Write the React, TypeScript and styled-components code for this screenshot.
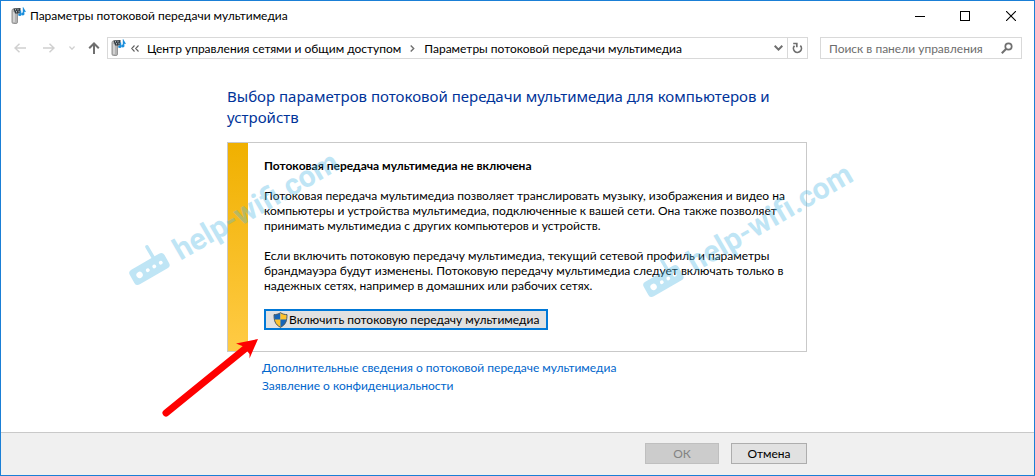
import React from "react";
import styled, { createGlobalStyle } from "styled-components";

const GlobalStyle = createGlobalStyle`
  *, *::before, *::after { box-sizing: border-box; }
  body { margin: 0; }
  body, button, input {
    font-family: Lato, "Noto Sans", sans-serif;
    font-size: 12px;
    line-height: 15px;
    color: #000;
  }
`;

const Window = styled.div`
  display: flex;
  flex-direction: column;
  min-height: 100vh;
  border: 1px solid #1a7fd6;
  background: #fff;
  overflow: hidden;
`;

const TitleBar = styled.header`
  display: flex;
  align-items: center;
  height: 29px;
  padding-left: 10px;
  gap: 4px;
`;

const WindowTitle = styled.h1`
  flex: 1;
  margin: 0;
  font-size: 12px;
  font-weight: 400;
  white-space: nowrap;
`;

const WindowControls = styled.div`
  display: flex;
`;

const IconButton = styled.button<{ $width: number; $color?: string }>`
  display: flex;
  align-items: center;
  justify-content: center;
  flex: none;
  width: ${(p) => p.$width}px;
  height: 28px;
  padding: 0;
  border: 0;
  background: transparent;
  color: ${(p) => p.$color ?? "#000"};
`;

const NavBar = styled.nav`
  display: flex;
  align-items: center;
  height: 36px;
  padding: 0 12px 0 4px;
`;

const AddressBar = styled.div`
  display: flex;
  align-items: center;
  flex: 1;
  min-width: 0;
  height: 22px;
  margin: 0 12px 0 1px;
  padding-left: 3px;
  border: 1px solid #d9d9d9;
`;

const Crumbs = styled.ol`
  display: flex;
  align-items: center;
  flex: 1;
  min-width: 0;
  margin: 0;
  padding: 0 0 0 5px;
  list-style: none;
  white-space: nowrap;
  overflow: hidden;
`;

const Crumb = styled.li`
  display: flex;
  align-items: center;
`;

const CrumbLink = styled.a`
  color: #000;
  text-decoration: none;
`;

const Separator = styled.svg`
  flex: none;
  margin: 0 9px;
`;

const Overflow = styled.svg`
  flex: none;
  margin-right: 8px;
`;

const RefreshCell = styled.div`
  display: flex;
  align-items: center;
  height: 20px;
  border-left: 1px solid #d9d9d9;
`;

const SearchBox = styled.label`
  display: flex;
  align-items: center;
  width: 202px;
  height: 22px;
  padding: 0 8px;
  border: 1px solid #d9d9d9;
`;

const SearchInput = styled.input`
  flex: 1;
  min-width: 0;
  padding: 0;
  border: 0;
  outline: 0;
  background: transparent;
  &::placeholder { color: #6d6d6d; opacity: 1; }
`;

const Main = styled.main`
  flex: 1;
  padding: 20px 17px 31px 16px;
`;

const Column = styled.div`
  position: relative;
  max-width: 580px;
  margin: 0 auto;
`;

const Heading = styled.h2`
  margin: 0 0 14px;
  font-family: "Noto Sans", sans-serif;
  font-size: 15px;
  line-height: 21px;
  font-weight: 400;
  color: #003399;
`;

const Panel = styled.section`
  display: flex;
  border: 1px solid #c9c9c9;
`;

const WarningStripe = styled.div`
  flex: none;
  width: 20px;
  background: linear-gradient(#f0b000, #ffcb45);
`;

const PanelBody = styled.div`
  padding: 15px 16px 21px;
`;

const PanelTitle = styled.h3`
  margin: 0 0 15px;
  font-size: 12px;
  line-height: 15px;
  font-weight: 700;
`;

const Paragraph = styled.p`
  margin: 0 0 15px;
`;

const EnableButton = styled.button`
  display: flex;
  align-items: center;
  gap: 1px;
  height: 21px;
  min-width: 284px;
  margin-top: 16px;
  padding: 0 7px;
  border: 2px solid #0078d7;
  background: #e1e1e1;
  white-space: nowrap;
`;

const Links = styled.div`
  display: flex;
  flex-direction: column;
  align-items: flex-start;
  padding: 7px 0 0 35px;
`;

const TextLink = styled.a`
  line-height: 18px;
  color: #0066cc;
  text-decoration: none;
`;

const Footer = styled.footer`
  padding: 10px 17px 11px 16px;
  border-top: 1px solid #c9c9c9;
  background: #f0f0f0;
`;

const FooterActions = styled.div`
  display: flex;
  justify-content: flex-end;
  gap: 12px;
  max-width: 580px;
  margin: 0 auto;
`;

const DialogButton = styled.button`
  min-width: 76px;
  height: 21px;
  padding: 0 12px;
  border: 1px solid #adadad;
  background: #e1e1e1;
  &:disabled {
    min-width: 74px;
    border-color: #bfbfbf;
    background: #cccccc;
    color: #838383;
  }
`;

const Overlay = styled.svg<{ $left: number; $top: number }>`
  position: absolute;
  left: ${(p) => p.$left}px;
  top: ${(p) => p.$top}px;
  overflow: visible;
  pointer-events: none;
`;

function MediaIcon() {
  return (
    <svg width="15" height="18" viewBox="0 0 15 18" aria-hidden="true">
      <rect x="1" y="2" width="5.500" height="14.5" rx="1.500" fill="#b4b4b4" stroke="#959595" />
      <path d="M3 5v10" stroke="#dedede" strokeWidth="1.4" />
      <path d="M2.500 1.500 9.500 1v5.500H4z" fill="#343c42" />
      <path d="M4 2.800h1m1.500 0h1M5 4.800h1m1.500 0h1" stroke="#dfe5e8" />
      <path d="M9.500 7.500V3.500M12.500 6.500V2l1.800 3" fill="none" stroke="#1c8fdc" strokeWidth="1.400" />
      <ellipse cx="8.800" cy="7.700" rx="1.700" ry="1.300" fill="#1c8fdc" />
      <ellipse cx="11.800" cy="7" rx="1.700" ry="1.400" fill="#1c8fdc" />
    </svg>
  );
}

function ShieldIcon() {
  return (
    <svg width="15" height="16" viewBox="0 0 15 16" aria-hidden="true">
      <path d="M7.500 .5C5.500 2 3 2.500 1 2.500c0 6 1 10 6.500 13z" fill="#1565b8" />
      <path d="M7.500 .5c2 1.500 4.500 2 6.500 2 0 6-1 10-6.500 13z" fill="#fdc22d" />
      <path d="M1.200 7.500h6.300v8C3.500 13.300 1.800 10.800 1.200 7.500z" fill="#fdc22d" />
      <path d="M13.800 7.500H7.500v8c4-2.200 5.700-4.700 6.300-8z" fill="#1565b8" />
      <path d="M7.500 .7C5.500 2.200 3 2.600 1 2.600c0 6 1 9.800 6.500 12.700C13 12.400 14 8.600 14 2.600c-2 0-4.500-.4-6.500-1.900z" fill="none" stroke="#4f5d66" strokeWidth="1" />
    </svg>
  );
}

function Arrow({ flip = false }: { flip?: boolean }) {
  return (
    <svg width="12" height="10" viewBox="0 0 12 10" fill="none" stroke="currentColor" strokeWidth="1.500" aria-hidden="true">
      <path d={flip ? "M0 5h11M6.500 .7 11 5 6.500 9.300" : "M12 5H1M5.500 .7 1 5l4.500 4.300"} />
    </svg>
  );
}

function Watermark({ left, top }: { left: number; top: number }) {
  return (
    <Overlay $left={left} $top={top} width="220" height="132" viewBox="0 0 220 132" aria-hidden="true">
      <g transform="translate(10 126) rotate(-30)" opacity="0.360">
        <path fill="#4fb8e4" fillRule="evenodd" d="M5-16h9v0h23a4 4 0 0 1 4 4v9a4 4 0 0 1-4 4H5a4 4 0 0 1-4-4v-9a4 4 0 0 1 4-4zM9.500-10.500a3.200 3.200 0 1 0 0 6.400 3.200 3.200 0 0 0 0-6.400zM19-9.200a1.900 1.900 0 1 0 0 3.800 1.900 1.900 0 0 0 0-3.800zM26.500-9.200a1.900 1.900 0 1 0 0 3.800 1.900 1.900 0 0 0 0-3.800zM34-9.200a1.900 1.900 0 1 0 0 3.800 1.900 1.900 0 0 0 0-3.800z" />
        <path d="M30-16v-12" stroke="#4fb8e4" strokeWidth="3.500" strokeLinecap="round" />
        <text x="52" y="1" fill="#4fb8e4" fontFamily="Roboto, sans-serif" fontWeight="700" fontSize="30">
          help-wifi.com
        </text>
      </g>
    </Overlay>
  );
}

export default function App() {
  return (
    <>
      <GlobalStyle />
      <Window>
        <TitleBar>
          <MediaIcon />
          <WindowTitle>Параметры потоковой передачи мультимедиа</WindowTitle>
          <WindowControls>
            <IconButton $width={46} aria-label="Свернуть">
              <svg width="10" height="10" viewBox="0 0 10 10"><path d="M0 5.500h10" stroke="#000" /></svg>
            </IconButton>
            <IconButton $width={44} aria-label="Развернуть">
              <svg width="10" height="10" viewBox="0 0 10 10"><rect x=".5" y=".5" width="9" height="9" fill="none" stroke="#000" /></svg>
            </IconButton>
            <IconButton $width={47} aria-label="Закрыть">
              <svg width="10" height="10" viewBox="0 0 10 10"><path d="M0 0l10 10M10 0 0 10" stroke="#000" strokeWidth="1.100" /></svg>
            </IconButton>
          </WindowControls>
        </TitleBar>

        <NavBar aria-label="Навигация">
          <IconButton $width={30} $color="#d0d0d0" aria-label="Назад"><Arrow /></IconButton>
          <IconButton $width={28} $color="#d0d0d0" aria-label="Вперед"><Arrow flip /></IconButton>
          <IconButton $width={18} $color="#d0d0d0" aria-label="Последние расположения">
            <svg width="6" height="4" viewBox="0 0 6 4" fill="none" stroke="currentColor" strokeWidth="1.300"><path d="M.4 .5 3 3.200 5.600 .5" /></svg>
          </IconButton>
          <IconButton $width={25} $color="#6f6f6f" aria-label="Вверх">
            <svg width="12" height="12" viewBox="0 0 12 12" fill="none" stroke="currentColor" strokeWidth="2"><path d="M6 12V1.500M1.200 6.300 6 1.500l4.800 4.800" /></svg>
          </IconButton>
          <AddressBar>
            <MediaIcon />
            <Crumbs>
              <Crumb>
                <Overflow width="8" height="7" viewBox="0 0 8 7" fill="none" stroke="#5f5f5f" strokeWidth="1.100" aria-hidden="true"><path d="M3.500 .5.700 3.500l2.800 3M7.500 .5 4.700 3.500l2.800 3" /></Overflow>
                <CrumbLink href="#network">Центр управления сетями и общим доступом</CrumbLink>
              </Crumb>
              <Crumb>
                <Separator width="5" height="7" viewBox="0 0 5 7" fill="none" stroke="#6f6f6f" strokeWidth="1.400" aria-hidden="true"><path d="M.7 .5l3 3-3 3" /></Separator>
                <CrumbLink href="#streaming">Параметры потоковой передачи мультимедиа</CrumbLink>
              </Crumb>
            </Crumbs>
            <IconButton $width={18} $color="#6f6f6f" aria-label="Предыдущие расположения">
              <svg width="9" height="6" viewBox="0 0 9 6" fill="none" stroke="currentColor" strokeWidth="2"><path d="M.7 .8l3.800 3.800L8.300 .8" /></svg>
            </IconButton>
            <RefreshCell>
              <IconButton $width={19} $color="#6f6f6f" aria-label="Обновить">
                <svg width="11" height="12" viewBox="0 0 11 12" fill="none" stroke="currentColor" strokeWidth="1.700"><path d="M8.300 3.600A4 4 0 1 1 2.500 3.700" /><path d="M1.200 1.500h3.600v3.700" /></svg>
              </IconButton>
            </RefreshCell>
          </AddressBar>
          <SearchBox>
            <SearchInput type="text" aria-label="Поиск в панели управления" placeholder="Поиск в панели управления" />
            <svg width="12" height="12" viewBox="0 0 12 12" fill="none" stroke="#6f6f6f" aria-hidden="true"><circle cx="7.500" cy="4.500" r="3.200" strokeWidth="1.700" /><path d="M5 7 .8 11.200" strokeWidth="2" /></svg>
          </SearchBox>
        </NavBar>

        <Main>
          <Column>
            <Heading>Выбор параметров потоковой передачи мультимедиа для компьютеров и<br />устройств</Heading>
            <Panel>
              <WarningStripe />
              <PanelBody>
                <PanelTitle>Потоковая передача мультимедиа не включена</PanelTitle>
                <Paragraph>
                  Потоковая передача мультимедиа позволяет транслировать музыку, изображения и видео на<br />
                  компьютеры и устройства мультимедиа, подключенные к вашей сети. Она также позволяет<br />
                  принимать мультимедиа с других компьютеров и устройств.
                </Paragraph>
                <Paragraph>
                  Если включить потоковую передачу мультимедиа, текущий сетевой профиль и параметры<br />
                  брандмауэра будут изменены. Потоковую передачу мультимедиа следует включать только в<br />
                  надежных сетях, например в домашних или рабочих сетях.
                </Paragraph>
                <EnableButton>
                  <ShieldIcon />
                  Включить потоковую передачу мультимедиа
                </EnableButton>
              </PanelBody>
            </Panel>
            <Links>
              <TextLink href="#more">Дополнительные сведения о потоковой передаче мультимедиа</TextLink>
              <TextLink href="#privacy">Заявление о конфиденциальности</TextLink>
            </Links>
            <Watermark left={-102} top={74} />
            <Watermark left={412} top={86} />
            <Overlay $left={-67} $top={248} width="102" height="88" viewBox="0 0 102 88" aria-hidden="true">
              <path d="M6 79 86 14" stroke="#fe0000" strokeWidth="7" strokeLinecap="round" />
              <path d="M98 5 76 9.500l7.500 3 6 7.500L89.500 24.500z" fill="#fe0000" />
            </Overlay>
          </Column>
        </Main>

        <Footer>
          <FooterActions>
            <DialogButton disabled>ОК</DialogButton>
            <DialogButton>Отмена</DialogButton>
          </FooterActions>
        </Footer>
      </Window>
    </>
  );
}
